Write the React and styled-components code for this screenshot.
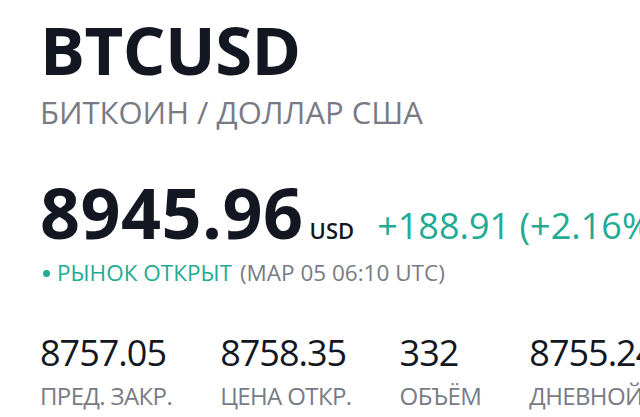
import styled, { createGlobalStyle } from "styled-components";

const GlobalStyle = createGlobalStyle`
  body {
    margin: 0;
    background: #ffffff;
    font-family: "Open Sans", "DejaVu Sans", sans-serif;
    color: #131722;
    overflow: hidden;
  }
`;

const Page = styled.div`
  display: flex;
  flex-direction: column;
  padding: 15px 0 0 40px;
  white-space: nowrap;
`;

const Symbol = styled.h1`
  margin: 0;
  font-size: 67px;
  line-height: 68px;
  font-weight: 700;
  letter-spacing: -0.5px;
  color: #131722;
`;

const Description = styled.div`
  margin-top: 11px;
  font-size: 31px;
  line-height: 36px;
  color: #787b86;
`;

const PriceRow = styled.div`
  display: flex;
  align-items: baseline;
  margin-top: 49px;
`;

const Price = styled.span`
  font-size: 70px;
  line-height: 66px;
  font-weight: 700;
  letter-spacing: 0.5px;
  color: #131722;
`;

const Currency = styled.span`
  margin-left: 6px;
  font-size: 22px;
  line-height: 22px;
  font-weight: 600;
  color: #131722;
`;

const Change = styled.span`
  margin-left: 23px;
  font-size: 36px;
  line-height: 36px;
  color: ${({ $up }) => ($up ? "#22ab94" : "#f23645")};
`;

const Status = styled.div`
  display: flex;
  align-items: center;
  margin-top: 15px;
  font-size: 22.5px;
  line-height: 26px;
  color: #787b86;
`;

const Dot = styled.span`
  width: 7px;
  height: 7px;
  border-radius: 50%;
  background: #22ab94;
  margin: 0 7px 0 3px;
`;

const Open = styled.span`
  color: #22ab94;
  margin-right: 8px;
`;

const Stats = styled.div`
  display: flex;
  gap: 48px;
  margin-top: 47px;
`;

const Stat = styled.div`
  display: flex;
  flex-direction: column;
`;

const Value = styled.span`
  font-size: 36px;
  line-height: 40px;
  letter-spacing: -1px;
  color: #131722;
`;

const Label = styled.span`
  margin-top: 9px;
  font-size: 24px;
  line-height: 28px;
  letter-spacing: -0.6px;
  color: #787b86;
`;

const stats = [
  { value: "8757.05", label: "ПРЕД. ЗАКР." },
  { value: "8758.35", label: "ЦЕНА ОТКР." },
  { value: "332", label: "ОБЪЁМ" },
  { value: "8755.24 — 8951.32", label: "ДНЕВНОЙ ДИАПАЗОН" },
];

export default function App() {
  return (
    <>
      <GlobalStyle />
      <Page>
        <Symbol>BTCUSD</Symbol>
        <Description>БИТКОИН / ДОЛЛАР США</Description>
        <PriceRow>
          <Price>8945.96</Price>
          <Currency>USD</Currency>
          <Change $up>+188.91 (+2.16%)</Change>
        </PriceRow>
        <Status>
          <Dot />
          <Open>РЫНОК ОТКРЫТ</Open>
          (МАР 05 06:10 UTC)
        </Status>
        <Stats>
          {stats.map((s) => (
            <Stat key={s.label}>
              <Value>{s.value}</Value>
              <Label>{s.label}</Label>
            </Stat>
          ))}
        </Stats>
      </Page>
    </>
  );
}
